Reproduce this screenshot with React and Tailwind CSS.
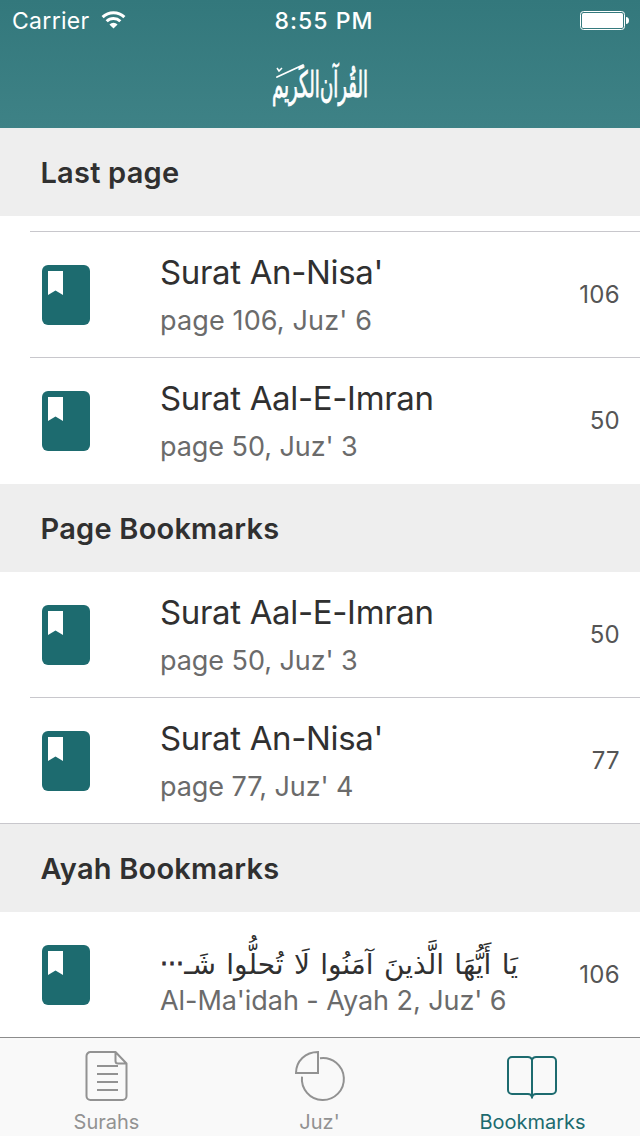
const sections = [
  {
    title: 'Last page',
    lead: true,
    rows: [
      { title: "Surat An-Nisa'", sub: "page 106, Juz' 6", wide: true, page: 106, line: 'inset' },
      { title: 'Surat Aal-E-Imran', sub: "page 50, Juz' 3", page: 50, line: 'none' },
    ],
  },
  {
    title: 'Page Bookmarks',
    rows: [
      { title: 'Surat Aal-E-Imran', sub: "page 50, Juz' 3", page: 50, line: 'inset' },
      { title: "Surat An-Nisa'", sub: "page 77, Juz' 4", page: 77, line: 'full' },
    ],
  },
  {
    title: 'Ayah Bookmarks',
    rows: [
      {
        arabic: 'يَا أَيُّهَا الَّذينَ آمَنُوا لَا تُحلُّوا شَـ',
        sub: "Al-Ma'idah - Ayah 2, Juz' 6",
        page: 106,
        line: 'none',
      },
    ],
  },
];

function BookIcon() {
  return (
    <svg className="h-[60px] w-12 shrink-0" viewBox="0 0 48 60">
      <rect width="48" height="60" rx="6" fill="#1d6b6f" />
      <path d="M6 6h15v24l-7.5-4.5L6 30z" fill="#fff" />
    </svg>
  );
}

function Row({ row }) {
  return (
    <div>
      <div className="flex h-[125px] items-start pl-[42px] pr-[20px]">
        <div className="pt-[33px]">
          <BookIcon />
        </div>
        <div className="ml-[70px] flex-1 whitespace-nowrap">
          {row.arabic ? (
            <div
              dir="rtl"
              className="flex h-[69px] w-[358px] items-start justify-between pt-[32px] font-['DejaVu_Sans',sans-serif] text-[28px] leading-[42px] text-[#303030]"
            >
              <span className="[word-spacing:1.4px]">{row.arabic}</span>
              <span className="relative -top-[8px] text-[24px] [-webkit-text-stroke:0.8px_#303030]">…</span>
            </div>
          ) : (
            <div className="h-[69px] pt-[20px] text-[33px] leading-[40px] tracking-[-0.34px] text-[#303030]">{row.title}</div>
          )}
          <div
            className={
              row.wide
                ? 'text-[27px] leading-[40px] tracking-[0.14px] text-[#6b6b6b]'
                : 'text-[27px] leading-[40px] tracking-[-0.06px] text-[#6b6b6b]'
            }
          >
            {row.sub}
          </div>
        </div>
        <div className="pt-[47px] text-[24px] leading-[32px] tracking-[0.3px] text-[#555]">{row.page}</div>
      </div>
      {row.line === 'inset' && <div className="ml-[30px] h-px bg-[#c8c7cc]" />}
      {row.line === 'full' && <div className="h-px bg-[#c8c7cc]" />}
      {row.line === 'none' && <div className="h-px" />}
    </div>
  );
}

function PageIcon() {
  return (
    <svg className="h-[52px] w-[52px]" viewBox="0 0 52 52" fill="none" stroke="#929292" strokeWidth="2">
      <path d="M34.5 2H9.500a4 4 0 0 0-4 4v40a4 4 0 0 0 4 4h32a4 4 0 0 0 4-4V13.500zM34.500 2.500V11a2.500 2.500 0 0 0 2.500 2.500h8.500" strokeLinejoin="round" />
      <path d="M16 16h21M16 24h21M16 32h21M16 40h21" />
    </svg>
  );
}

function PieIcon() {
  return (
    <svg className="h-[52px] w-[52px]" viewBox="0 0 52 52" fill="none" stroke="#929292" strokeWidth="2">
      <path d="M24 2v21H2C2 11 11.500 2 24 2z" />
      <path d="M26 8.200a21 21 0 1 1-18 18.500" />
    </svg>
  );
}

function OpenBookIcon() {
  return (
    <svg className="mr-[2px] h-[52px] w-[52px]" viewBox="0 0 52 52" fill="none" stroke="#1d6b6f" strokeWidth="2">
      <path d="M26 9.500C25 7.500 24 7 22 7H6a4 4 0 0 0-4 4v29a4 4 0 0 0 4 4h16c2.500 0 3.500 1 4 3 .5-2 1.500-3 4-3h16a4 4 0 0 0 4-4V11a4 4 0 0 0-4-4H30c-2 0-3 .5-4 2.500zM26 9v39.500" />
    </svg>
  );
}

function Tab({ icon, label, active }) {
  return (
    <div className={active ? 'flex w-[213px] flex-col items-center text-[#1d6b6f]' : 'flex w-[213px] flex-col items-center text-[#929292]'}>
      <div className="mt-[12px] h-[52px]">{icon}</div>
      <div className="mt-[8px] text-[20px] leading-[24px]">{label}</div>
    </div>
  );
}

export default function App() {
  return (
    <div className="flex h-[1136px] w-[640px] flex-col overflow-hidden bg-white font-['Inter',sans-serif]">
      <header className="h-32 shrink-0 bg-linear-to-b from-[#33787c] to-[#3e8286] text-white">
        <div className="grid h-10 grid-cols-3 items-center pl-[12px] pr-[11px] text-[23px]">
          <div className="flex items-center gap-[11px]">
            <span className="pt-[2px] tracking-[0.3px]">Carrier</span>
            <svg className="h-[18px] w-[25px]" viewBox="0 0 26 19" fill="none" stroke="#fff" strokeWidth="3.200">
              <path d="M1.500 6.500a16.500 16.500 0 0 1 23 0M5.800 10.800a10.500 10.500 0 0 1 14.400 0" />
              <path d="M13 18.500l-4.300-4.300a6.200 6.200 0 0 1 8.600 0z" fill="#fff" stroke="none" />
            </svg>
          </div>
          <div className="pl-[7px] pt-[2px] text-center font-medium tracking-[1px]">8:55 PM</div>
          <svg className="h-[19px] w-[49px] justify-self-end" viewBox="0 0 49 19">
            <rect x="0.500" y="0.500" width="44" height="18" rx="3" fill="none" stroke="#fff" />
            <rect x="2" y="2" width="41" height="15" rx="1.500" fill="#fff" />
            <path d="M46 6c2 0 3 1.500 3 3.500S48 13 46 13z" fill="#fff" />
          </svg>
        </div>
        <div className="flex h-[88px] items-center justify-center">
          <svg className="h-[80px] w-[140px] overflow-visible" viewBox="0 0 140 80" fill="#fff" stroke="#fff" strokeWidth="0.900">
            <text
              x="70"
              y="53"
              direction="rtl"
              textAnchor="middle"
              textLength="96"
              lengthAdjust="spacingAndGlyphs"
              className="font-['DejaVu_Sans',sans-serif] text-[36px] [word-spacing:-11px]"
            >
              القُرآن الكَريم
            </text>
            <path d="M27 33l26-12" strokeWidth="1.800" strokeLinecap="round" />
            <path d="M27 24l2 3 3-3" fill="none" strokeWidth="1.500" />
          </svg>
        </div>
      </header>
      <main className="h-[909px] shrink-0">
        {sections.map((section) => (
          <section key={section.title}>
            <h2 className="flex h-[88px] items-center bg-[#eeeeee] pl-[40.5px] pt-[2px] text-[29px] font-semibold tracking-[0.22px] text-[#303030]">
              {section.title}
            </h2>
            {section.lead && <div className="ml-[30px] h-4 border-b border-[#c8c7cc]" />}
            {section.rows.map((row) => (
              <Row key={row.title ?? row.sub} row={row} />
            ))}
          </section>
        ))}
      </main>
      <nav className="flex h-[99px] shrink-0 border-t border-[#8c8c8c] bg-[#f9f9f9]">
        <Tab icon={<PageIcon />} label="Surahs" />
        <Tab icon={<PieIcon />} label="Juz'" />
        <Tab icon={<OpenBookIcon />} label="Bookmarks" active />
      </nav>
    </div>
  );
}
